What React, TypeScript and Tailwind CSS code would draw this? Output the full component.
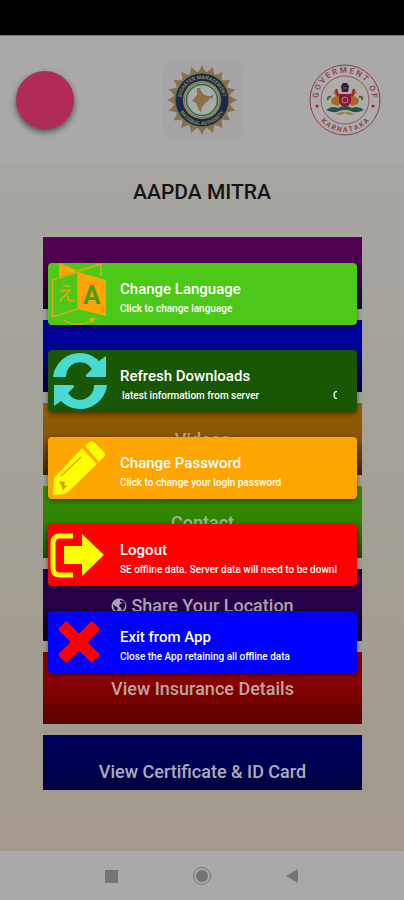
import type { ReactNode } from 'react'

const menu: { id: string; label?: string; aria?: string; icon?: boolean; tone: string }[] = [
  { id: 'home', aria: 'Home', tone: 'from-[#550055] via-[#480048] to-[#1c001c] text-[#b2a5b2]' },
  { id: 'news', aria: 'News', tone: 'from-[#0000a2] via-[#000090] to-[#00003c] text-[#a9a9b8]' },
  { id: 'videos', label: 'Videos', tone: 'from-[#985f00] via-[#875500] to-[#3a2400] text-[#b5a78e]' },
  { id: 'contact', label: 'Contact', tone: 'from-[#349000] via-[#2f8300] to-[#1c4d00] text-[#a3b59a]' },
  { id: 'share', label: 'Share Your Location', icon: true, tone: 'from-[#2d0054] via-[#260047] to-[#10001f] text-[#aaa4af]' },
  { id: 'insurance', label: 'View Insurance Details', tone: 'from-[#900000] via-[#840000] to-[#5a0000] text-[#bda5a1]' },
  { id: 'certificate', label: 'View Certificate & ID Card', tone: 'from-[#00005e] via-[#000050] to-[#000028] text-[#acacbc]' },
]

function GlobeIcon() {
  return (
    <svg viewBox="0 0 16 16" className="size-4" aria-hidden="true">
      <circle cx="8" cy="8" r="7.500" fill="#aaa4af" />
      <path d="M9 2 L13 3 L14.500 7 L13 11 L11 13 L10 10 L8 8 L9 6 L12 5 L9 4 Z" fill="#260047" />
      <path d="M2 6 L4 8 L6 9 L7 11 L5 13 L3 11 Z" fill="#260047" />
    </svg>
  )
}

function LanguageIcon() {
  return (
    <svg viewBox="0 0 64 62" className="h-full w-16" aria-hidden="true">
      <path d="M11 0 L30 8 L11 14 Z" fill="#ffa50a" />
      <path d="M30 8 L53 1 V13" fill="none" stroke="#e8a814" strokeWidth="1.5" />
      <path d="M4.500 17 L30 9 V46 L4.500 54 Z" fill="#4bc81a" stroke="#e0a814" strokeWidth="1.5" />
      <path d="M30 9 L58 17 V53 L30 46 Z" fill="#ffa50a" />
      <path d="M16 57 C24 63 37 63 44 57" fill="none" stroke="#e8a814" strokeWidth="1.5" />
      <path d="M47 54 L41 56 L45 60 Z" fill="#ffa50a" />
      <text x="8" y="38" fontSize="20" fill="#dba816" className="font-['Noto_Sans_CJK_JP',sans-serif]">え</text>
      <text x="35" y="41" fontSize="26" fontWeight="700" fill="#4f9a14" className="font-[Roboto,sans-serif]">A</text>
    </svg>
  )
}

function RefreshIcon() {
  const arrow = 'M5 27 A27 27 0 0 1 51 11 L58 6 V27 H39 Q37 26 38 25 L44 19 A14 14 0 0 0 18 27 Z'
  return (
    <svg viewBox="0 0 64 62" className="h-full w-16" fill="#48dbd3" aria-hidden="true">
      <path d={arrow} />
      <path d={arrow} transform="rotate(180 32 31)" />
    </svg>
  )
}

function PencilIcon() {
  return (
    <svg viewBox="0 0 64 62" className="h-full w-16" fill="#ffff00" aria-hidden="true">
      <path d="M34 11 L49 27 L20 55 Q18 57 15 57 L5 58 L6 41 Z" />
      <path d="M37 9 L41 5 Q44 3 47 6 L56 15 Q58 18 56 20 L51 25 Z" />
      <path d="M13 39 L33 20" stroke="#e0a800" strokeWidth="1.500" fill="none" />
      <path d="M11 44 L17 45 L16 48 L19 49 L15 53 L13 48 Z" fill="#d99a00" />
    </svg>
  )
}

function LogoutIcon() {
  return (
    <svg viewBox="0 0 64 62" className="h-full w-16" aria-hidden="true">
      <path d="M25 12 H12 Q5 12 5 19 V44 Q5 51 12 51 H25" fill="none" stroke="#ffff00" strokeWidth="5" />
      <path d="M16 22 H34 V10 L56 31 L34 52 V40 H16 Z" fill="#ffff00" />
    </svg>
  )
}

function CrossIcon() {
  return (
    <svg viewBox="0 0 64 62" className="h-full w-16" aria-hidden="true">
      <g fill="#ff0000">
        <rect x="7" y="25" width="48" height="12" rx="2" transform="rotate(45 31 31)" />
        <rect x="7" y="25" width="48" height="12" rx="2" transform="rotate(-45 31 31)" />
      </g>
    </svg>
  )
}

type Action = { title: string; note: ReactNode; tone: string; icon: ReactNode }

const actions: Action[] = [
  { title: 'Change Language', note: 'Click to change language', tone: 'bg-[#4cc818]', icon: <LanguageIcon /> },
  {
    title: 'Refresh Downloads',
    note: (
      <span className="flex justify-between pl-0.5">
        <span>latest informatiom from server</span>
        <span className="w-1 overflow-hidden">C</span>
      </span>
    ),
    tone: 'bg-[#195705]',
    icon: <RefreshIcon />,
  },
  { title: 'Change Password', note: 'Click to change your login password', tone: 'bg-[#ffa500]', icon: <PencilIcon /> },
  { title: 'Logout', note: 'SE offline data. Server data will need to be downl', tone: 'bg-[#ff0000]', icon: <LogoutIcon /> },
  { title: 'Exit from App', note: 'Close the App retaining all offline data', tone: 'bg-[#0000ff]', icon: <CrossIcon /> },
]

function DisasterEmblem() {
  return (
    <svg viewBox="-40 -40 80 80" className="size-20 rounded-xl bg-[#a7a4a8]" role="img" aria-label="Disaster Management Authority">
      <defs>
        <path id="ring-top" d="M-21 0 A21 21 0 0 1 21 0" />
        <path id="ring-bottom" d="M-25 0 A25 25 0 0 0 25 0" />
      </defs>
      {Array.from({ length: 20 }, (_, i) => (
        <path key={i} d="M-5 -27 Q-2 -30 0 -35 Q2 -30 5 -27 Z" fill="#86714a" transform={`rotate(${i * 18})`} />
      ))}
      <circle r="28" fill="#86714a" />
      <circle r="26.500" fill="#172c4b" />
      <circle r="19" fill="#a78d55" />
      <circle r="17.500" fill="#a9a9a5" stroke="#9c5a38" strokeWidth="1" />
      <circle r="15.500" fill="#a9aaaa" stroke="#0c7650" strokeWidth="1.500" />
      <path
        d="M-5 -12 L-2 -12 L-1 -9 L1 -6 L5 -4 L9 -4 L12 -6 L10 -1 L8 -2 L6 1 L3 3 L0 7 L-1 12 L-3 10 L-6 3 L-10 1 L-8 -2 L-5 -5 Z"
        fill="#8b7041"
      />
      <g fontSize="5" fontWeight="700" fill="#8b8a55" textAnchor="middle" className="font-[Roboto,sans-serif]">
        <text><textPath href="#ring-top" startOffset="50%">DISASTER MANAGEMENT</textPath></text>
        <text><textPath href="#ring-bottom" startOffset="50%">NATIONAL AUTHORITY</textPath></text>
      </g>
    </svg>
  )
}

function KarnatakaEmblem() {
  return (
    <svg viewBox="-37 -37 74 74" className="size-[74px]" role="img" aria-label="Government of Karnataka">
      <defs>
        <path id="seal-top" d="M-26 7 A27 27 0 1 1 26 7" />
        <path id="seal-bottom" d="M-32 0 A32 32 0 0 0 32 0" />
      </defs>
      <circle r="35" fill="#acacab" stroke="#933947" strokeWidth="1" />
      <circle r="24" fill="none" stroke="#98545e" strokeWidth="1" />
      <g fontWeight="500" fill="#8f3744" textAnchor="middle" className="font-[Roboto,sans-serif]">
        <text fontSize="8"><textPath href="#seal-top" startOffset="50%">G O V E R M E N T&#160;&#160;&#160;O F</textPath></text>
        <text fontSize="7"><textPath href="#seal-bottom" startOffset="50%">K A R N A T A K A</textPath></text>
      </g>
      <circle cx="-28" cy="6" r="1.500" fill="#8f2038" />
      <circle cx="28" cy="6" r="1.500" fill="#8f2038" />
      {/* lions, shield and base */}
      <path d="M-7 6 L-13 4 L-14 -1 L-9 -4 L-12 -8 L-8 -11 L-6 -6 L-4 1 Z" fill="#a96a20" />
      <path d="M7 6 L13 4 L14 -1 L9 -4 L12 -8 L8 -11 L6 -6 L4 1 Z" fill="#a96a20" />
      <path d="M-9 -11 L-7 -4 M9 -11 L7 -4" stroke="#95222e" strokeWidth="2" />
      <path d="M-17 0 Q-18 -4 -14 -3 M17 0 Q18 -4 14 -3" stroke="#505c28" strokeWidth="2" fill="none" />
      <path d="M-19 10 Q-13 5 -7 8 Q0 4 7 8 Q13 5 19 10 Q10 14 6 11 Q0 9 -6 11 Q-10 14 -19 10 Z" fill="#24524d" />
      <path d="M-10 14 L-4 12 H4 L10 14 L4 15 L0 13 L-4 15 Z" fill="#9b8240" />
      <path d="M-6 -6 H6 V2 Q5 6 0 7 Q-5 6 -6 2 Z" fill="#8d1836" />
      <circle cy="0" r="3" fill="none" stroke="#b0848c" strokeWidth="1" />
      <path d="M-3 -8 L-4 -14 L-2 -17 H2 L4 -14 L3 -8 Z" fill="#29243e" />
      <path d="M-2 -12 H2" stroke="#9d2634" strokeWidth="2" />
    </svg>
  )
}

export default function App() {
  return (
    <div className="relative flex min-h-screen flex-col bg-linear-to-b from-[#a8a8a6] via-[#a4a198] to-[#a2978a] font-[Roboto,sans-serif]">
      <div className="h-9 border-b border-[#777] bg-black" />

      <header className="grid h-32 grid-cols-3 items-center bg-[#a9a9a9]">
        <button aria-label="Menu" className="ml-4 size-[58px] rounded-full bg-[#b02b59] shadow-[0_3px_6px_rgba(0,0,0,0.55)]" />
        <div className="flex justify-center"><DisasterEmblem /></div>
        <div className="flex justify-end pr-[22px]"><KarnatakaEmblem /></div>
      </header>

      <main className="flex-1">
        <h1 className="mt-3 text-center text-[21px] leading-8 font-medium text-[#151515]">AAPDA MITRA</h1>

        <nav className="mr-[42px] ml-[43px] mt-[29px] flex h-[553px] flex-col gap-[11px] overflow-hidden">
          {menu.map(item => (
            <button
              key={item.id}
              aria-label={item.aria}
              className={`flex h-[72px] shrink-0 items-center justify-center gap-1 bg-linear-to-b pt-px text-lg font-medium ${item.tone}`}
            >
              {item.icon && <GlobeIcon />}
              {item.label}
            </button>
          ))}
        </nav>
      </main>

      <footer className="mt-[61px] flex h-[49px] items-center justify-center bg-[#a9a9a9]">
        <div className="grid w-[272px] grid-cols-3 justify-items-center">
          <button aria-label="Recent apps">
            <svg viewBox="0 0 20 20" className="size-5"><rect x="4" y="4" width="13" height="13" fill="#747474" /></svg>
          </button>
          <button aria-label="Home">
            <svg viewBox="0 0 20 20" className="size-5">
              <circle cx="10" cy="10" r="8.500" fill="none" stroke="#777" strokeWidth="1" />
              <circle cx="10" cy="10" r="6" fill="#747474" />
            </svg>
          </button>
          <button aria-label="Back">
            <svg viewBox="0 0 20 20" className="size-5"><path d="M15 3 V17 L3 10 Z" fill="#747474" /></svg>
          </button>
        </div>
      </footer>

      {/* Action cards over the menu */}
      <div className="absolute top-[263px] right-[47px] left-12 flex flex-col gap-[25px]">
        {actions.map(action => (
          <button
            key={action.title}
            className={`flex h-[62px] w-full items-center rounded text-left text-white shadow-[0_2px_5px_rgba(0,0,0,0.5)] ${action.tone}`}
          >
            {action.icon}
            <span className="ml-2 flex min-w-0 flex-1 flex-col pt-2.5 pr-5">
              <span className="text-[15px] leading-5 font-medium">{action.title}</span>
              <span className="overflow-hidden text-[10px] leading-5 font-medium whitespace-nowrap">{action.note}</span>
            </span>
          </button>
        ))}
      </div>
    </div>
  )
}
